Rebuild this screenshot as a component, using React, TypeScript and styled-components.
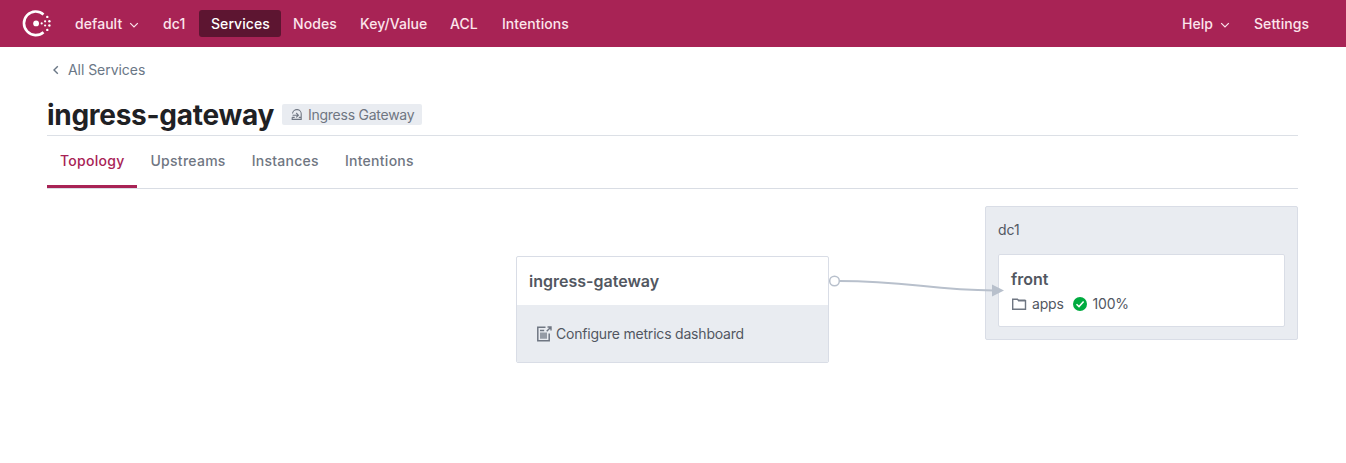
import React from 'react';
import styled, { createGlobalStyle, css } from 'styled-components';

const GlobalStyle = createGlobalStyle`
  * { box-sizing: border-box; }
  body {
    margin: 0;
    background: #fff;
    font-family: Inter, "Liberation Sans", sans-serif;
    font-size: 14px;
    color: #525761;
  }
`;

const Page = styled.div`
  min-height: 463px;
`;

const Header = styled.header`
  display: flex;
  align-items: center;
  height: 47px;
  padding: 0 24px 0 22px;
  background: #a82355;
`;

const Logo = styled.svg`
  display: block;
  flex: none;
  margin-right: 12px;
`;

const NavGroup = styled.nav<{ $end?: boolean }>`
  display: flex;
  ${p => p.$end && css`margin-left: auto;`}
`;

const NavItem = styled.a<{ $active?: boolean; $width: number }>`
  display: flex;
  align-items: center;
  width: ${p => p.$width}px;
  height: 27px;
  padding-left: 12px;
  border-radius: 3px;
  font-weight: 500;
  letter-spacing: 0.06px;
  white-space: nowrap;
  color: ${p => (p.$active ? '#fff' : '#fce5ec')};
  background: ${p => (p.$active ? '#5d1531' : 'transparent')};
`;

const Chevron = styled.svg`
  margin: 2px 0 0 7px;
`;

const Main = styled.main`
  padding: 0 48px 0 47px;
`;

const Breadcrumb = styled.a`
  display: flex;
  align-items: center;
  gap: 8px;
  height: 45px;
  margin-bottom: 2px;
  padding-left: 5px;
  letter-spacing: -0.05px;
  color: #6a7786;
`;

const TitleRow = styled.div`
  display: flex;
  align-items: center;
  gap: 8px;
  height: 42px;
  border-bottom: 1px solid #dce0e6;
`;

const Title = styled.h1`
  margin: 0;
  font-size: 28px;
  line-height: 40px;
  font-weight: 700;
  letter-spacing: -0.28px;
  color: #1f2124;
`;

const Kind = styled.span`
  display: flex;
  align-items: center;
  gap: 5px;
  width: 140px;
  height: 21px;
  padding-left: 9px;
  border-radius: 2px;
  background: #e9ecf1;
  white-space: nowrap;
  letter-spacing: -0.25px;
  color: #6f7682;
`;

const Tabs = styled.nav`
  display: flex;
  height: 53px;
  border-bottom: 1px solid #d9dde4;
`;

const Tab = styled.a<{ $active?: boolean }>`
  height: 52px;
  padding: 0 13px;
  line-height: 50px;
  font-weight: 500;
  letter-spacing: 0.27px;
  color: ${p => (p.$active ? '#a82355' : '#6f7682')};
  border-bottom: 3px solid ${p => (p.$active ? '#a82355' : 'transparent')};
`;

const Topology = styled.section`
  display: flex;
  align-items: flex-start;
  justify-content: flex-end;
  padding-top: 17px;
`;

const Card = styled.article`
  width: 313px;
  height: 107px;
  margin-top: 50px;
  border: 1px solid #d9dde6;
  border-radius: 2px;
  overflow: hidden;
`;

const CardTitle = styled.div`
  height: 48px;
  padding-left: 12px;
  line-height: 49px;
  font-size: 16px;
  font-weight: 600;
`;

const CardFooter = styled.a`
  display: flex;
  align-items: center;
  gap: 4px;
  height: 57px;
  padding-left: 20px;
  background: #e9ecf1;
  letter-spacing: -0.2px;
`;

const Connector = styled.svg`
  display: block;
  position: relative;
  z-index: 1;
  width: 176px;
  height: 40px;
  margin: 60px -20px 0 0;
`;

const Datacenter = styled.section`
  width: 313px;
  height: 134px;
  padding: 0 12px;
  border: 1px solid #d9dde6;
  border-radius: 2px;
  background: #e9ecf1;
`;

const DatacenterName = styled.div`
  height: 47px;
  line-height: 46px;
`;

const Service = styled.article`
  height: 73px;
  padding: 12px;
  border: 1px solid #d9dde6;
  border-radius: 2px;
  background: #fff;
`;

const ServiceName = styled.div`
  line-height: 25px;
  font-size: 16px;
  font-weight: 600;
`;

const ServiceMeta = styled.div`
  display: flex;
  align-items: center;
  height: 23px;
  letter-spacing: -0.2px;
`;

const MetaText = styled.span<{ $end?: number }>`
  margin: 0 ${p => p.$end ?? 0}px 0 5px;
`;

const Down = () => (
  <Chevron width="10" height="8" viewBox="0 0 10 8" fill="none" stroke="#fce5ec" strokeWidth="1.2">
    <path d="M1.2 2.2 5 6 8.8 2.2" />
  </Chevron>
);

const ConsulLogo = () => (
  <Logo width="29" height="28" viewBox="0 0 29 28" fill="#fff">
    <path d="M21.5 22.2A11.8 11.8 0 1 1 21.5 4.4" fill="none" stroke="#fff" strokeWidth="2.6" />
    <circle cx="14.1" cy="13.4" r="2.9" />
    <circle cx="19.7" cy="13.4" r="1.1" />
    <circle cx="23.1" cy="11.3" r="1.1" />
    <circle cx="23.1" cy="15.5" r="1.1" />
    <circle cx="25.3" cy="6.9" r="1.2" />
    <circle cx="27.4" cy="11.3" r="1.2" />
    <circle cx="27.4" cy="15.5" r="1.2" />
    <circle cx="25.3" cy="19.9" r="1.2" />
  </Logo>
);

export default function App() {
  return (
    <Page>
      <GlobalStyle />
      <Header>
        <ConsulLogo />
        <NavGroup>
          <NavItem $width={88}>default<Down /></NavItem>
          <NavItem $width={48}>dc1</NavItem>
          <NavItem $width={82} $active>Services</NavItem>
          <NavItem $width={67}>Nodes</NavItem>
          <NavItem $width={90}>Key/Value</NavItem>
          <NavItem $width={52}>ACL</NavItem>
          <NavItem $width={92}>Intentions</NavItem>
        </NavGroup>
        <NavGroup $end>
          <NavItem $width={72}>Help<Down /></NavItem>
          <NavItem $width={80}>Settings</NavItem>
        </NavGroup>
      </Header>
      <Main>
        <Breadcrumb>
          <svg width="8" height="10" viewBox="0 0 8 10" fill="none" stroke="#6a7786" strokeWidth="1.4">
            <path d="M5.8 1.2 2 5l3.8 3.8" />
          </svg>
          All Services
        </Breadcrumb>
        <TitleRow>
          <Title>ingress-gateway</Title>
          <Kind>
            <svg width="12" height="12" viewBox="0 0 12 12" fill="none" stroke="#6f7682" strokeWidth="1.1">
              <path d="M1.5 4.5A4.3 4.3 0 0 1 10.2 5.5V10.4H1.2V8.3M1.6 6.2H7M5.2 4 7.4 6.2 5.2 8.4M1.2 8.4H3.7M7.8 8.4H10.2" />
            </svg>
            Ingress Gateway
          </Kind>
        </TitleRow>
        <Tabs>
          <Tab $active>Topology</Tab>
          <Tab>Upstreams</Tab>
          <Tab>Instances</Tab>
          <Tab>Intentions</Tab>
        </Tabs>
        <Topology>
          <Card>
            <CardTitle>ingress-gateway</CardTitle>
            <CardFooter>
              <svg width="15" height="16" viewBox="0 0 15 16" fill="none" stroke="#6f7682">
                <path d="M8.5 1.3H.8V14.8H12.2V7.5" strokeWidth="1.5" />
                <path d="M3 4.5H7.2M10.5 1H14V4.6M13.8 1.2 9.7 5.3" strokeWidth="1.4" />
                <path d="M3 6.5H10V12.7H3Z" fill="#959ba5" stroke="none" />
              </svg>
              Configure metrics dashboard
            </CardFooter>
          </Card>
          <Connector viewBox="0 0 176 40">
            <path d="M10 15C80 15 100 24 165 24.5" fill="none" stroke="#b8c0cc" strokeWidth="2" />
            <circle cx="5.5" cy="15" r="4.8" fill="#fff" stroke="#b8c0cc" strokeWidth="1.5" />
            <path d="M163 18.5 175 24.5 163 30.5Z" fill="#b8c0cc" />
          </Connector>
          <Datacenter>
            <DatacenterName>dc1</DatacenterName>
            <Service>
              <ServiceName>front</ServiceName>
              <ServiceMeta>
                <svg width="16" height="14" viewBox="0 0 16 14" fill="none" stroke="#6f7682" strokeWidth="1.4">
                  <path d="M1.7 2.2H6.4L7.6 3.6H14.5V12.3H1.7Z" />
                  <path d="M7 3.4H14.5" strokeWidth="1.8" />
                </svg>
                <MetaText $end={8}>apps</MetaText>
                <svg width="16" height="16" viewBox="0 0 16 16">
                  <circle cx="8" cy="8" r="7" fill="#00ab40" />
                  <path d="M4.5 8.2 7 10.6 11.6 5.6" fill="none" stroke="#fff" strokeWidth="1.5" />
                </svg>
                <MetaText>100%</MetaText>
              </ServiceMeta>
            </Service>
          </Datacenter>
        </Topology>
      </Main>
    </Page>
  );
}
